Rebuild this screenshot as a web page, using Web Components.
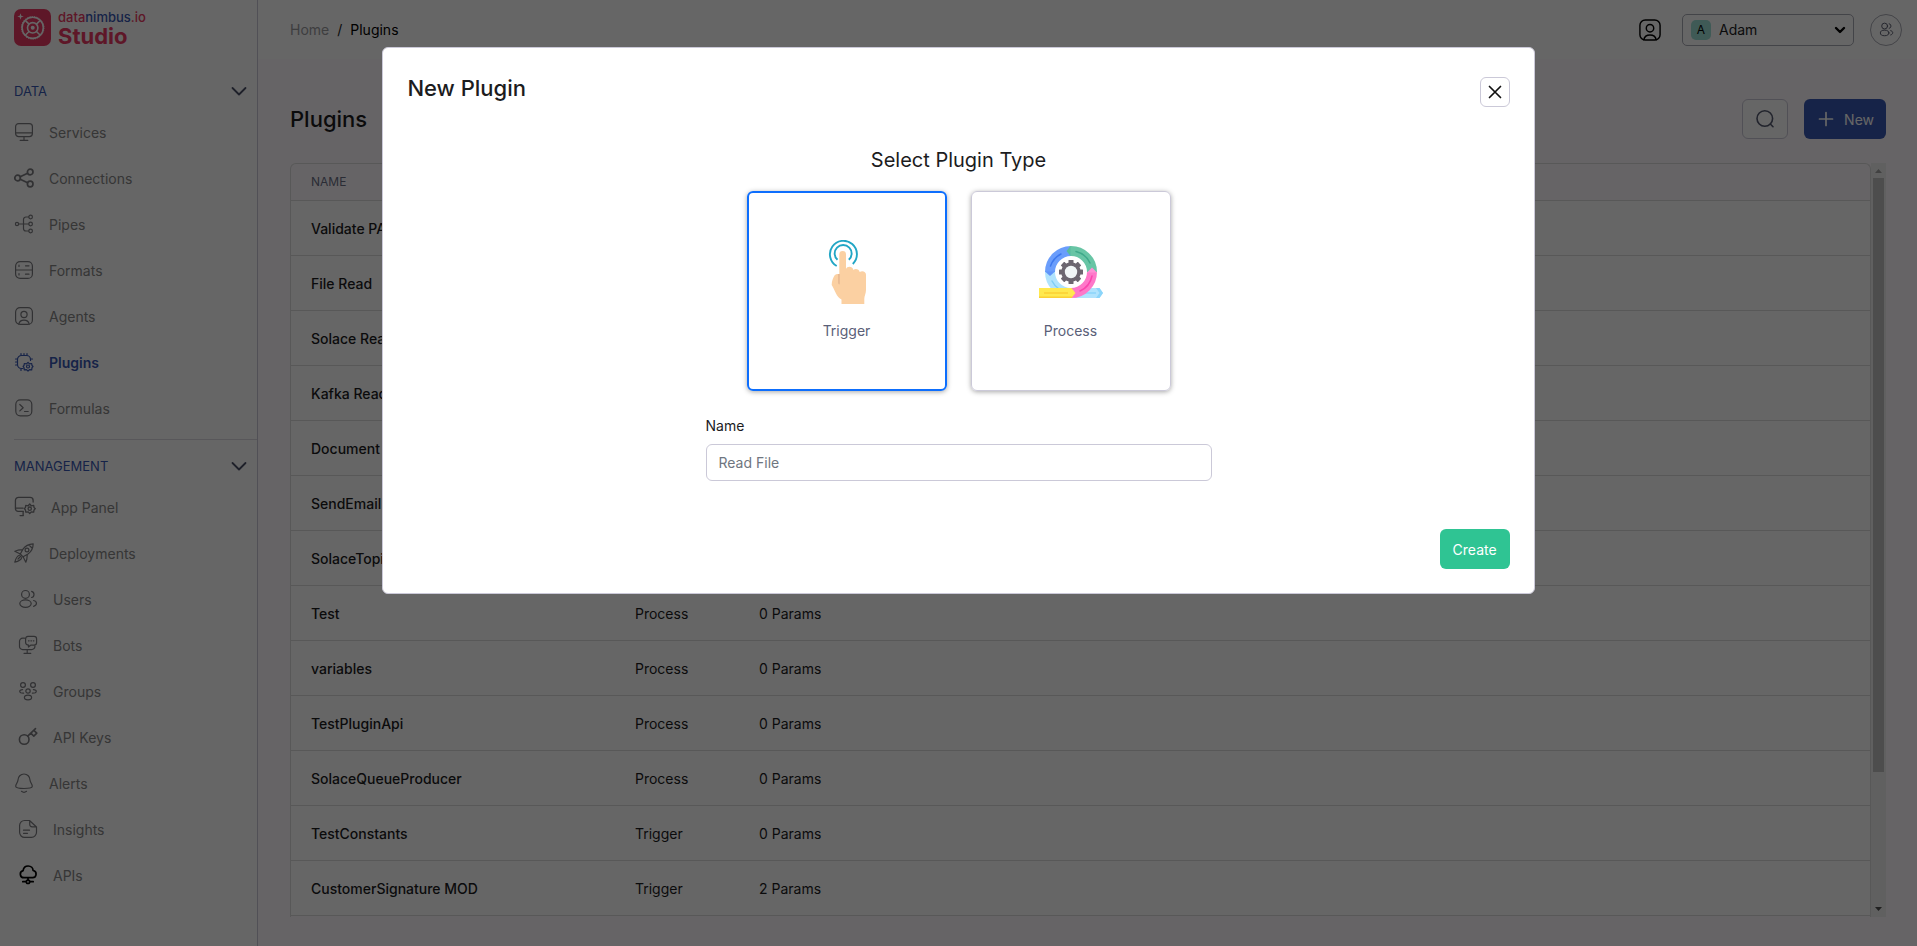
<!DOCTYPE html>
<html lang="en">
<head>
<meta charset="utf-8">
<title>Plugins - Studio</title>
<style>
  :root {
    --brand: #3959b3;
    --red: #eb3a64;
    --line: #cbc9d8;
    --row-line: #dcdcdc;
    --muted: #878787;
    --ink: #1c1c1e;
    --page: #fffafe;
  }
  body { margin: 0; font: 14px/21px Inter, sans-serif; color: var(--ink); background: var(--page); }
</style>
</head>
<body>
<studio-app></studio-app>

<script>
const ICONS = {
  services: '<rect x="1.6" y="1.6" width="16.8" height="13" rx="3"/><path d="M1.6 10.8h16.8M10 14.6v3.6M6.2 18.4h7.6"/>',
  connections: '<g stroke-width="1.7"><circle cx="3.6" cy="10" r="2.8"/><circle cx="16.2" cy="4" r="2.8"/><circle cx="16.2" cy="16" r="2.8"/><path d="M6.2 8.8l7.4-3.5M6.2 11.2l7.4 3.5"/></g>',
  pipes: '<circle cx="3" cy="10" r="1.6"/><circle cx="16.6" cy="3" r="1.8"/><circle cx="16.6" cy="10" r="1.8"/><circle cx="16.6" cy="17" r="1.8"/><path d="M4.6 10h10.2M14.8 3H12a2.5 2.5 0 0 0-2.5 2.500v9A2.500 2.500 0 0 0 12 17h2.800"/>',
  formats: '<rect x="1.600" y="1.600" width="16.800" height="16.800" rx="4.500"/><path d="M1.600 10h16.800M5 5v1.500M5 13.500V15M11.500 5.800h3.500M11.500 14.200h3.500"/>',
  agents: '<rect x="1.600" y="1.600" width="16.800" height="16.800" rx="4.500"/><circle cx="10" cy="8.500" r="3.100"/><path d="M4.800 18.200c.6-3 2.400-4 5.200-4s4.600 1 5.200 4"/>',
  plugins: '<path d="M9 16.500H7.500a4 4 0 0 1-4-4v-5a4 4 0 0 1 4-4h5a4 4 0 0 1 4 4V8.500M7 3.500v-2M10 3.500v-2M13 3.500v-2M3.500 7h-2M3.500 10h-2M3.500 13h-2M16.500 7h2M7 18.500v-2"/><circle cx="14" cy="14.500" r="1.500"/><path d="M14 10.300l1.500 1.600 2.200-.4.300 2 1 1-1 1.200-.3 2.200-2.200-.3L14 19l-1.500-1.400-2.200.3-.3-2.200-.9-1.200.9-1 .3-2 2.200.4z"/>',
  formulas: '<rect x="1.800" y="1.800" width="16" height="16" rx="4.500"/><path d="M5.800 6.500l3.400 3.200-3.400 3.200M10.500 13.500h3.700"/>',
  panel: '<path d="M8.500 14H3.800a2.500 2.500 0 0 1-2.500-2.500V4a2.800 2.800 0 0 1 2.800-2.800h10.500A2.800 2.800 0 0 1 17.400 4v1.500M1.300 11h7M8.300 14v3.600M5.500 17.800h3"/><circle cx="14.300" cy="11.500" r="1.500"/><path d="M14.300 7.300l1.400 1.600 2.200-.3.300 1.800 1.200 1.100-1.200 1.200-.3 2-2.200-.3-1.400 1.500-1.400-1.500-2.200.3-.3-2-1-1.200 1-1.100.3-1.800 2.200.3z"/>',
  rocket: '<path d="M19.200.8c-4.500.2-8 2-10.200 5.300L6.300 11l2.800 2.800L14 11c3.300-2.200 5.100-5.700 5.200-10.200zM8.600 6.700L3.800 7.200.8 8.200l5.500 2.800M13.300 11.400l-.5 4.800-1 3-2.700-5.400M5.500 12.200c-2 .6-4 4-4.700 7 3-.7 6.400-2.700 7-4.700M4 16l3.500-3.500M15 2l3 3"/><circle cx="13" cy="7" r="1.900"/>',
  users: '<circle cx="7.500" cy="5.400" r="3.900"/><ellipse cx="7.500" cy="14.600" rx="5.700" ry="3.700"/><path d="M13.600 2.300a3.200 3.200 0 0 1 0 6.200M15.600 11.500c3.800.8 3.800 4.800 0 5.800"/>',
  bots: '<path d="M6.500 3.200H4.700a3.200 3.200 0 0 0-3.200 3.200v5a3.200 3.200 0 0 0 3.200 3.200h9a3.200 3.200 0 0 0 3.200-3.200V11M9.200 14.600v3.400M6 18.300h6.800M10 1.300h6a2.600 2.600 0 0 1 2.600 2.600v3.600a2.600 2.600 0 0 1-2.600 2.600h-3l-2.600 1.900.2-1.900c-2 0-3-1-3-2.600V3.900A2.600 2.600 0 0 1 10 1.300z"/><path d="M10.500 5.800h.6M12.900 5.800h.6M15.300 5.800h.6"/>',
  groups: '<circle cx="5" cy="4" r="2.400"/><circle cx="15" cy="4" r="2.400"/><circle cx="10" cy="10" r="2.200"/><ellipse cx="10" cy="16.500" rx="3.600" ry="2.300"/><path d="M4.600 8.600c-4 .2-4 3.700 1 3.600M15.400 8.600c4 .2 4 3.700-1 3.600"/>',
  key: '<g stroke-width="1.600"><circle cx="6.200" cy="12.500" r="4.800"/><path d="M9.700 9.100l7.800-7.500M12.800 6.200l3 2.900 3-3-3-2.800"/></g>',
  bell: '<path d="M10 1a6 6 0 0 0-6 6c-.1 2.500-2.300 4-2.300 6.300 0 1.700 3.300 2.200 8.300 2.200s8.300-.5 8.300-2.200C18.300 11 16.100 9.500 16 7a6 6 0 0 0-6-6zM7.500 18.300c1.500 1.200 3.500 1.200 5 0"/>',
  insights: '<path d="M11.500 1.500H6.800A5 5 0 0 0 1.600 6.600v6.700a5 5 0 0 0 5.200 5.100h6.600a5 5 0 0 0 5.100-5.100V8zM11.700 1.700v3.600c0 1.700.8 2.500 2.500 2.500h4M5.500 11.200h6M5.500 14.300h4"/>',
  cloud: '<g stroke-width="1.700"><path d="M6 12.700a3.600 3.600 0 0 1-.9-7.100c.4-3 2.700-4.600 5.100-4.600 2.900 0 4.800 2.200 4.900 4.500 4.200.6 3.900 7.200-.5 7.200zM10 12.700v2.300M4.800 16.700h3.400M11.800 16.700h3.400"/><circle cx="10" cy="16.800" r="1.700"/></g>',
  chevron: '<path d="M3.500 7l6.500 6.500L16.500 7" stroke-width="1.800"/>',
  search: '<circle cx="9.800" cy="9.500" r="7.800" stroke-width="1.600"/><path d="M15.300 15l2.700 2.700" stroke-width="1.600"/>',
  plus: '<path d="M10 3.500v13M3.500 10h13" stroke-width="1.700"/>',
  close: '<path d="M4.500 4.500l11 11M15.500 4.500l-11 11" stroke-width="1.700"/>',
  caret: '<path d="M5 7.500l5 5 5-5" stroke-width="3"/>'
};

function define(tag, css, markup) {
  customElements.define(tag, class extends HTMLElement {
    constructor() {
      super();
      const host = this;
      const html = typeof markup === 'function' ? markup(host) : markup;
      const template = document.createElement('template');
      template.innerHTML = `<style>*{box-sizing:border-box}${css}</style>${html}`;
      this.attachShadow({ mode: 'open' }).append(template.content.cloneNode(true));
    }
  });
}

define('dn-icon',
  `:host{display:block;flex:none;width:var(--size,20px);height:var(--size,20px)}
   svg{display:block;width:100%;height:100%;fill:none;stroke:currentColor;stroke-width:1.2;stroke-linecap:round;stroke-linejoin:round}`,
  el => `<svg viewBox="0 0 20 20" aria-hidden="true">${ICONS[el.getAttribute('name')]}</svg>`);

define('dn-logo',
  `:host{display:block;padding:9px 14px 0;height:61px}
   a{display:flex;gap:7px;text-decoration:none;color:var(--red)}
   svg{width:37px;height:37px;flex:none}
   span{display:flex;flex-direction:column}
   small{font:500 13px/16px Inter,sans-serif}
   i{font-style:normal;color:var(--brand)}
   b{font:700 22px/22px Inter,sans-serif}`,
  `<a href="#"><svg viewBox="0 0 37 37" aria-hidden="true"><rect width="37" height="37" rx="7" fill="var(--red)"/>
    <g fill="none" stroke="#fff"><circle cx="18.700" cy="18.800" r="10.600" stroke-width="1.600"/><circle cx="18.700" cy="18.800" r="11.300" stroke-width="1" stroke-dasharray="1.200 1.160"/><circle cx="18.700" cy="18.800" r="5.200" stroke-width="1.600"/>
    <path d="M11.500 11.600l3.500 3.500M26 11.600l-3.500 3.500M11.500 26l3.500-3.500M26 26l-3.500-3.500" stroke-width="1.500"/></g>
    <circle cx="18.700" cy="18.800" r="2" fill="#fff"/><path d="M6.500 4.200l.8 2.500 2.500.8-2.500.8-.8 2.500-.8-2.500-2.500-.8 2.500-.8z" fill="#fff"/></svg>
   <span><small>data<i>nimbus</i>.io</small><b>Studio</b></span></a>`);

define('dn-nav-item',
  `:host{display:block}
   a{display:flex;align-items:center;gap:15px;height:46px;padding-left:14px;color:var(--muted);text-decoration:none}
   :host([inset]) a{padding-left:18px}
   :host([active]) a{color:var(--brand);font-weight:600}
   dn-icon{color:#7c7c80}
   :host([wide]) dn-icon{--size:22px}
   :host([active]) dn-icon{color:inherit}
   :host([solid]) dn-icon{color:#000}`,
  el => `<a href="#"><dn-icon name="${el.getAttribute('icon')}"></dn-icon><slot></slot></a>`);

define('dn-nav-group',
  `:host{display:block}
   button{display:flex;width:100%;height:40px;align-items:center;justify-content:space-between;padding:4px 8px 0 14px;border:0;background:none;font:13px/21px Inter,sans-serif;color:var(--brand)}
   dn-icon{color:#4b5068}`,
  el => `<button aria-expanded="true">${el.getAttribute('label')}<dn-icon name="chevron"></dn-icon></button><slot></slot>`);

define('dn-sidebar',
  `:host{display:block;flex:none;width:258px;background:#fff;border-right:1px solid var(--line)}
   hr{margin:8px 0 4px 14px;border:0;border-top:1px solid #dddae0}
   nav{padding-top:8px}`,
  `<dn-logo></dn-logo><nav>
   <dn-nav-group label="DATA">
    <dn-nav-item icon="services">Services</dn-nav-item><dn-nav-item icon="connections">Connections</dn-nav-item>
    <dn-nav-item icon="pipes">Pipes</dn-nav-item><dn-nav-item icon="formats">Formats</dn-nav-item>
    <dn-nav-item icon="agents">Agents</dn-nav-item><dn-nav-item icon="plugins" active>Plugins</dn-nav-item>
    <dn-nav-item icon="formulas">Formulas</dn-nav-item>
   </dn-nav-group><hr>
   <dn-nav-group label="MANAGEMENT">
    <dn-nav-item icon="panel" wide>App Panel</dn-nav-item><dn-nav-item icon="rocket">Deployments</dn-nav-item>
    <dn-nav-item icon="users" inset>Users</dn-nav-item><dn-nav-item icon="bots" inset>Bots</dn-nav-item>
    <dn-nav-item icon="groups" inset>Groups</dn-nav-item><dn-nav-item icon="key" inset>API Keys</dn-nav-item>
    <dn-nav-item icon="bell">Alerts</dn-nav-item><dn-nav-item icon="insights" inset>Insights</dn-nav-item>
    <dn-nav-item icon="cloud" inset solid>APIs</dn-nav-item>
   </dn-nav-group></nav>`);

define('dn-topbar',
  `:host{display:flex;align-items:center;height:59px;padding:0 15px 0 32px;background:#fff}
   nav{display:flex;gap:8px;flex:1;color:var(--ink)}
   nav a{color:#9b9b9f;text-decoration:none}
   nav b{font-weight:400;color:#000}
   .me{display:flex;border:0;padding:0;background:none;color:#000;margin-right:20px}
   .me dn-icon{--size:24px}
   .app{position:relative;display:flex;width:172px;margin-right:16px;color:#000}
   select{appearance:none;width:100%;height:32px;padding:0 36px;border:1px solid #a9aab4;border-radius:5px;background:none;font:14px/21px Inter,sans-serif;color:var(--ink)}
   .badge{position:absolute;left:9px;top:6px;width:20px;height:20px;border-radius:5px;background:#9ee1d7;text-align:center;font:12px/20px Inter,sans-serif;pointer-events:none}
   .app dn-icon{position:absolute;right:6px;top:8px;--size:16px;pointer-events:none}
   .round{display:grid;place-items:center;width:32px;height:32px;padding:0;border:1px solid #a9aab4;border-radius:50%;background:none;color:#4d5064}
   .round dn-icon{--size:15px}`,
  `<nav aria-label="Breadcrumb"><a href="#">Home</a><span>/</span><b>Plugins</b></nav>
   <button class="me" aria-label="Profile"><dn-icon name="agents"></dn-icon></button>
   <div class="app"><select aria-label="App"><option>Adam</option></select><span class="badge" aria-hidden="true">A</span><dn-icon name="caret"></dn-icon></div>
   <button class="round" aria-label="Members"><dn-icon name="users"></dn-icon></button>`);

define('dn-page-head',
  `:host{display:flex;align-items:center;gap:16px;padding:40px 31px 24px 32px}
   h1{flex:1;margin:0;font:500 22px/33px Inter,sans-serif}
   button{display:flex;align-items:center;justify-content:center;height:40px;border-radius:6px;font:14px/21px Inter,sans-serif}
   .search{width:46px;padding:0;border:1px solid var(--line);background:#fff;color:#555a70}
   .new{gap:8px;padding:0 12px;border:0;background:var(--brand);color:#fff}`,
  `<h1>Plugins</h1><button class="search" aria-label="Search"><dn-icon name="search"></dn-icon></button>
   <button class="new"><dn-icon name="plus"></dn-icon>New</button>`);

const ROWS = [
  ['Validate PAN', 'Process', '1 Params'], ['File Read', 'Trigger', '2 Params'], ['Solace Reader', 'Trigger', '4 Params'],
  ['Kafka Reader', 'Trigger', '3 Params'], ['Document', 'Process', '2 Params'], ['SendEmail', 'Process', '5 Params'],
  ['SolaceTopic', 'Process', '3 Params'], ['Test', 'Process', '0 Params'], ['variables', 'Process', '0 Params'],
  ['TestPluginApi', 'Process', '0 Params'], ['SolaceQueueProducer', 'Process', '0 Params'],
  ['TestConstants', 'Trigger', '0 Params'], ['CustomerSignature MOD', 'Trigger', '2 Params']
];

define('dn-plugin-table',
  `:host{display:flex;margin:0 31px 29px 32px}
   .frame{flex:1;min-width:0;padding-bottom:1px;border:1px solid var(--row-line);border-bottom:0;border-radius:6px 6px 0 0}
   table{width:100%;border-collapse:separate;border-spacing:0;table-layout:fixed}
   th,td{padding:0 0 0 20px;text-align:left;border-bottom:1px solid var(--row-line)}
   th{height:37px;font:12px/18px Inter,sans-serif;color:#6a6f86}
   td{height:55px;background:#fff;padding-top:1px}
   td:first-child{font-weight:500}
   th+th,td+td{padding-left:0}
   .name{width:344px}.type{width:124px}
   .bar{display:flex;flex-direction:column;align-items:center;width:15px;background:#f1f1f1}
   .bar svg{width:15px;height:15px;flex:none}
   .track{flex:1}
   .thumb{width:11px;height:82%;background:#c1c1c1}`,
  `<div class="frame"><table><colgroup><col class="name"><col class="type"><col></colgroup>
    <thead><tr><th>NAME</th><th>TYPE</th><th>PARAMS</th></tr></thead>
    <tbody>${ROWS.map(r => `<tr>${r.map(c => `<td>${c}</td>`).join('')}</tr>`).join('')}</tbody></table></div>
   <div class="bar" aria-hidden="true"><svg viewBox="0 0 15 15"><path d="M4 10h7L7.500 6z" fill="#a3a3a3"/></svg>
    <div class="track"><div class="thumb"></div></div>
    <svg viewBox="0 0 15 15"><path d="M4 5h7L7.500 9z" fill="#505050"/></svg></div>`);

const HAND = `<svg viewBox="0 0 64 64" aria-hidden="true"><g fill="none" stroke="#22a6c5" stroke-width="1.900">
   <path d="M21.700 26A13.500 13.500 0 1 1 37.800 24"/><path d="M22.500 19.800A8.500 8.500 0 1 1 33.800 19.800"/></g>
   <path d="M24.300 14.300a3.350 3.350 0 0 1 6.700 0V29c1-3.200 6.600-3.200 7.400 1 1.800-1.800 5.800-1 6.300 2 2.500-1.800 6.300-.6 6.300 2.800V50c0 4-1.700 5.500-1.700 9v5H26.500v-4.500c-5.500-3-6.500-9.500-9.800-14.500 0-4 1.300-7 2.800-9.500 1.200-2 4.800-1.500 4.800-1.500z" fill="#fbd0a2"/>
   <path d="M23.200 34h1.500v10.500c-1 0-1.500-.8-1.500-2z" fill="#e5b690"/></svg>`;

const teeth = Array.from({ length: 8 }, (_, i) => `<rect x="29.500" y="20" width="5" height="5" rx=".5" transform="rotate(${i * 45} 32 32)"/>`).join('');
const CYCLE = `<svg viewBox="0 0 64 64" aria-hidden="true">
   <path d="M35 48h25.500l3.500 5-3.500 5H35z" fill="#b0e3fd"/><path d="M57 48h3.500l3.500 5-3.500 5H57l3.500-5zM46 52.300h11v1.400H46z" fill="#8bd5fa"/>
   <g fill="none" stroke-width="10"><path d="M32 53A21 21 0 0 1 11 32" stroke="#b0e3fd"/><path d="M11 32A21 21 0 0 1 32 11" stroke="#6a9dfb"/>
   <path d="M31 11A21 21 0 0 1 53 32" stroke="#68c5a5"/><path d="M53 32A21 21 0 0 1 32 53" stroke="#fe78c9"/></g>
   <path d="M6 31.500h10l-5 4.500z" fill="#5f94fa"/><path d="M31.500 6v10L27.500 11z" fill="#58bc9c"/><path d="M48 32.500h10l-5-5z" fill="#fe8fd5"/>
   <g fill="none" stroke-width="1.500" stroke-linecap="round"><path d="M11.500 26A21 21 0 0 1 22 14" stroke="#3d78ee"/><path d="M37 11.500A21 21 0 0 1 51 23" stroke="#3fa98a"/>
   <path d="M53 36A21 21 0 0 1 41 51" stroke="#fb45ae"/><path d="M13 41A21 21 0 0 0 20 49" stroke="#7fcdf5"/></g>
   <path d="M0 48h32.500l4 5-4 5H0z" fill="#ffe94f"/><path d="M0 56.500h33.700l-1.200 1.500H0zM5 52.200h24v1.500H5z" fill="#fbd035"/>
   <g fill="#6c6670">${teeth}<circle cx="32" cy="32" r="9.800"/></g><circle cx="32" cy="32" r="6.200" fill="#f1f6f7"/></svg>`;

define('dn-type-picker',
  `:host{display:block}
   fieldset{display:flex;flex-wrap:wrap;justify-content:center;gap:16px 24px;margin:0;padding:0;border:0}
   legend{width:100%;padding:0 0 16px;text-align:center;font:20px/30px Inter,sans-serif}
   label{position:relative;display:flex;flex-direction:column;align-items:center;justify-content:center;gap:16px;width:200px;height:200px;padding-bottom:2px;border:1px solid var(--line);border-radius:6px;color:#5a6078;box-shadow:0 1px 5px rgba(0,0,0,.35)}
   label:has(:checked){border:2px solid #0d6efd}
   input{position:absolute;inset:0;margin:0;opacity:0}
   svg{width:64px;height:64px}`,
  `<fieldset><legend>Select Plugin Type</legend>
   <label><input type="radio" name="type" checked>${HAND}Trigger</label>
   <label><input type="radio" name="type">${CYCLE}Process</label></fieldset>`);

define('dn-text-field',
  `:host{display:block;width:506px;max-width:100%}
   label{display:block;margin-bottom:8px}
   input{display:block;width:100%;height:37px;padding:0 12px;border:1px solid var(--line);border-radius:6px;font:14px/21px Inter,sans-serif;color:var(--ink)}
   input::placeholder{color:#6f7680;opacity:1}`,
  el => `<label for="field">${el.getAttribute('label')}</label><input id="field" type="text" placeholder="${el.getAttribute('placeholder')}">`);

define('dn-modal',
  `:host{position:fixed;inset:0;display:flex;justify-content:center;align-items:flex-start;padding-top:47px;background:rgba(0,0,0,.6)}
   dialog{position:static;display:flex;flex-direction:column;box-sizing:border-box;width:calc(60% + 2px);margin:0;padding:24px;border:1px solid var(--line);border-radius:6px;background:#fff;color:var(--ink)}
   header{display:flex;justify-content:space-between;height:40px}
   h2{margin:0;font:500 22px/33px Inter,sans-serif}
   header button{display:grid;place-items:center;align-self:center;width:30px;height:30px;padding:0;border:1px solid var(--line);border-radius:6px;background:#fff;color:#111}
   .body{display:flex;flex-direction:column;align-items:center;gap:24px;padding:33px 0 48px}
   footer{display:flex;justify-content:flex-end}
   footer button{height:40px;padding:0 13px;border:0;border-radius:6px;background:#2fc493;color:#fff;font:14px/21px Inter,sans-serif}`,
  el => `<dialog open aria-modal="true" aria-labelledby="title"><header><h2 id="title">${el.getAttribute('heading')}</h2>
   <button aria-label="Close"><dn-icon name="close"></dn-icon></button></header>
   <div class="body"><slot></slot></div><footer><button>Create</button></footer></dialog>`);

define('studio-app',
  `:host{display:flex;min-height:100vh}
   main{flex:1;min-width:0}`,
  `<dn-sidebar></dn-sidebar>
   <main><dn-topbar></dn-topbar><dn-page-head></dn-page-head><dn-plugin-table></dn-plugin-table></main>
   <dn-modal heading="New Plugin"><dn-type-picker></dn-type-picker>
    <dn-text-field label="Name" placeholder="Read File"></dn-text-field></dn-modal>`);
</script>
</body>
</html>
